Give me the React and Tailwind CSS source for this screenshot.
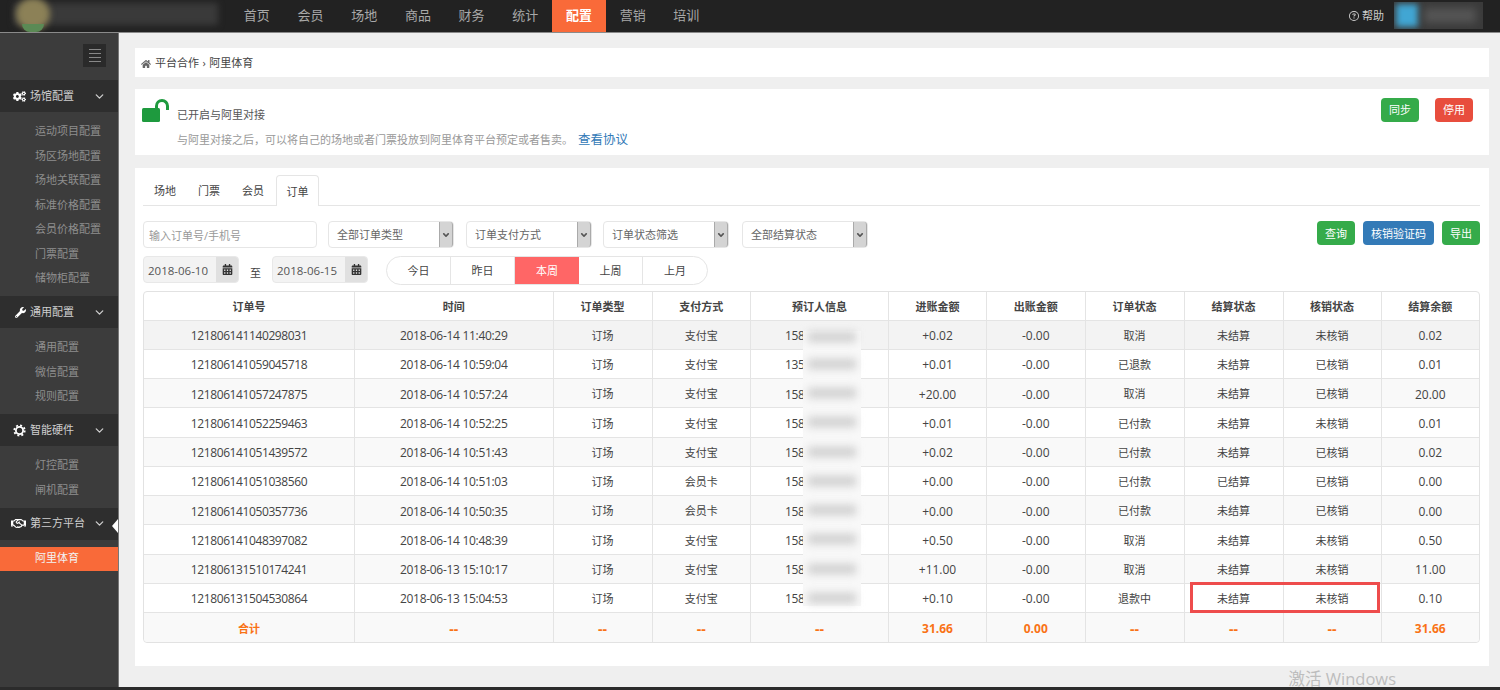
import { FaCogs, FaWrench, FaRegHandshake, FaHome, FaCalendarAlt, FaAngleDown } from "react-icons/fa";
import { FaRegCircleQuestion } from "react-icons/fa6";
import { ChevronDown } from "lucide-react";

const navItems = ["首页", "会员", "场地", "商品", "财务", "统计", "配置", "营销", "培训"];

function GearIcon() {
  return (
    <svg width="13" height="13" viewBox="0 0 13 13" fill="none" stroke="currentColor">
      <circle cx="6.5" cy="6.5" r="3.6" strokeWidth="1.8" />
      <circle cx="6.5" cy="6.5" r="5.2" strokeWidth="1.8" strokeDasharray="2 2.08" />
    </svg>
  );
}

const menu = [
  { title: "场馆配置", icon: <FaCogs className="text-[13px]" />, items: ["运动项目配置", "场区场地配置", "场地关联配置", "标准价格配置", "会员价格配置", "门票配置", "储物柜配置"] },
  { title: "通用配置", icon: <FaWrench className="text-[11px]" />, items: ["通用配置", "微信配置", "规则配置"] },
  { title: "智能硬件", icon: <GearIcon />, items: ["灯控配置", "闸机配置"] },
];

const columns = [
  ["订单号", "w-[211px]"],
  ["时间", "w-[198.5px]"],
  ["订单类型", "w-[99px]"],
  ["支付方式", "w-[98.5px]"],
  ["预订人信息", "w-[138px]"],
  ["进账金额", "w-[98px]"],
  ["出账金额", "w-[98.5px]"],
  ["订单状态", "w-[99px]"],
  ["结算状态", "w-[99px]"],
  ["核销状态", "w-[98px]"],
  ["结算余额", "w-[97.5px]"],
];

const orders = [
  ["121806141140298031", "2018-06-14 11:40:29", "支付宝", "158", "+0.02", "取消", "未结算", "未核销", "0.02"],
  ["121806141059045718", "2018-06-14 10:59:04", "支付宝", "135", "+0.01", "已退款", "未结算", "已核销", "0.01"],
  ["121806141057247875", "2018-06-14 10:57:24", "支付宝", "158", "+20.00", "取消", "未结算", "已核销", "20.00"],
  ["121806141052259463", "2018-06-14 10:52:25", "支付宝", "158", "+0.01", "已付款", "未结算", "未核销", "0.01"],
  ["121806141051439572", "2018-06-14 10:51:43", "支付宝", "158", "+0.02", "已付款", "未结算", "已核销", "0.02"],
  ["121806141051038560", "2018-06-14 10:51:03", "会员卡", "158", "+0.00", "已付款", "已结算", "已核销", "0.00"],
  ["121806141050357736", "2018-06-14 10:50:35", "会员卡", "158", "+0.00", "已付款", "未结算", "已核销", "0.00"],
  ["121806141048397082", "2018-06-14 10:48:39", "支付宝", "158", "+0.50", "取消", "未结算", "未核销", "0.50"],
  ["121806131510174241", "2018-06-13 15:10:17", "支付宝", "158", "+11.00", "取消", "未结算", "未核销", "11.00"],
  ["121806131504530864", "2018-06-13 15:04:53", "支付宝", "158", "+0.10", "退款中", "未结算", "未核销", "0.10"],
];

function Select({ label, className }) {
  return (
    <div className={"h-[27px] flex items-center justify-between rounded-[4px] border border-[#e6e6e6] bg-white pl-2 " + className}>
      <span className="text-[11px] pt-[2px] text-[#666]">{label}</span>
      <span className="w-[14px] h-full flex items-center justify-center bg-[#d4d4d4] border-x border-[#aaa] rounded-r-[3px]">
        <FaAngleDown className="text-[10px] text-[#555]" />
      </span>
    </div>
  );
}

function DateInput({ value }) {
  return (
    <div className="w-[96px] h-[27px] flex rounded-[4px] bg-[#f3f3f3] border border-[#e8e8e8] overflow-hidden">
      <span className="flex-1 pl-1 leading-[27px] text-[11.5px] text-[#555]">{value}</span>
      <span className="w-[22px] bg-[#e0e0e0] flex items-center justify-center">
        <FaCalendarAlt className="text-[11px] text-[#333]" />
      </span>
    </div>
  );
}

function Cell({ children, className = "", last }) {
  return (
    <div className={"flex items-center justify-center pt-[3px] " + (last ? "" : "border-r border-[#e4e4e4] ") + className}>
      {children}
    </div>
  );
}

export default function App() {
  return (
    <div className="w-[1500px] h-[690px] overflow-hidden flex flex-col bg-[#3c3c3c] text-[#333] font-['Open_Sans','Noto_Sans_CJK_SC',sans-serif]">
      <header className="h-[33px] shrink-0 flex bg-[#222] border-b border-[#8a8a8a]">
        <div className="w-[230px] relative overflow-hidden">
          <div className="absolute left-[14px] top-[3px] w-[204px] h-[22px] bg-[#3a3a3a] blur-[3px]" />
          <div className="absolute left-[16px] top-[-2px] w-[34px] h-[32px] rounded-full bg-[#8c8157] blur-[3px]" />
          <div className="absolute left-[22px] top-[24px] w-[22px] h-[8px] rounded-b-full bg-[#5b8a55]" />
        </div>
        <nav className="flex">
          {navItems.map((item) => (
            <a key={item} className={"w-[53.7px] h-[32px] flex items-center justify-center text-[13px] " + (item === "配置" ? "bg-[#f96a39] text-white font-bold" : "text-[#a8a8a8]")}>
              {item}
            </a>
          ))}
        </nav>
        <div className="ml-auto flex items-center pr-[17px]">
          <FaRegCircleQuestion className="text-[10px] text-[#ccc] mr-[3px]" />
          <span className="text-[11px] text-[#ccc] mr-[10px]">帮助</span>
          <div className="relative w-[89px] h-[27px] mt-[-2px] bg-[#3a3a3a] overflow-hidden">
            <div className="absolute left-[2px] top-[2px] w-[22px] h-[23px] bg-[#41a6d3] blur-[3px]" />
            <div className="absolute left-[30px] top-[6px] w-[52px] h-[15px] bg-[#555] blur-[4px]" />
          </div>
        </div>
      </header>

      <div className="flex-1 flex min-h-0">
        <aside className="w-[119px] shrink-0 bg-[#3c3c3c] border-r border-[#777]">
          <div className="h-[47px] pt-[11px] pr-[12px] flex justify-end">
            <div className="w-[23px] h-[23px] bg-[#2a2a2a] flex flex-col items-center justify-center gap-[3px]">
              <span className="w-[12px] h-px bg-[#888]" />
              <span className="w-[12px] h-px bg-[#888]" />
              <span className="w-[12px] h-px bg-[#888]" />
              <span className="w-[12px] h-px bg-[#888]" />
            </div>
          </div>
          {menu.map((group) => (
            <div key={group.title}>
              <div className="h-[32px] flex items-center bg-[#2e2e2e] text-[#cfcfcf] text-[11px]">
                <span className="w-[29px] flex justify-end pr-[3px] text-white">{group.icon}</span>
                <span className="pl-[1px]">{group.title}</span>
                <ChevronDown className="ml-auto mr-[12px] w-[13px] h-[13px]" strokeWidth={2.4} />
              </div>
              <div className="pt-[7px] pb-[5.5px]">
                {group.items.map((sub) => (
                  <div key={sub} className="h-[24.5px] pl-[35px] flex items-center text-[11px] text-[#8e8e8e]">{sub}</div>
                ))}
              </div>
            </div>
          ))}
          <div className="relative h-[32px] flex items-center bg-[#2e2e2e] text-[#cfcfcf] text-[11px]">
            <span className="w-[29px] flex justify-end pr-[3px] text-white"><FaRegHandshake className="text-[15px]" /></span>
            <span className="pl-[1px]">第三方平台</span>
            <ChevronDown className="ml-auto mr-[12px] w-[13px] h-[13px]" strokeWidth={2.4} />
            <span className="absolute right-0 top-[11px] border-y-[7px] border-y-transparent border-r-[6px] border-r-white" />
          </div>
          <div className="mt-[7px] h-[24px] pl-[35px] flex items-center bg-[#f96a39] text-[11px] text-[#f3f3f3]">阿里体育</div>
        </aside>

        <main className="relative flex-1 bg-[#efefef] pl-[16px] pr-[11px] pt-[15px]">
          <div className="h-[29px] bg-white flex items-center pl-[6px] pt-[2px] text-[11px] text-[#444]">
            <FaHome className="text-[10px] text-[#666] mr-[4px]" />
            <span>平台合作</span>
            <span className="mx-[3.5px]">›</span>
            <span>阿里体育</span>
          </div>

          <section className="mt-[12px] h-[66px] bg-white flex pl-[7px] pr-[16px] pt-[8px]">
            <svg width="27" height="23" viewBox="0 0 27 23" className="shrink-0 mt-[2px]">
              <rect x="0" y="9" width="18" height="14" rx="1.5" fill="#1e9a3e" />
              <path d="M14.5 10V7a5.5 5.5 0 0 1 11 0v4" fill="none" stroke="#1e9a3e" strokeWidth="3" />
            </svg>
            <div className="ml-[8px]">
              <div className="text-[11px] leading-[20px] text-[#555] mt-[8px]">已开启与阿里对接</div>
              <div className="text-[11px] leading-[16px] mt-[7px] text-[#999]">
                与阿里对接之后，可以将自己的场地或者门票投放到阿里体育平台预定或者售卖。
                <a className="ml-[5px] text-[12.5px] text-[#337ab7]">查看协议</a>
              </div>
            </div>
            <div className="ml-auto flex gap-[16px] pt-px">
              <button className="w-[38px] h-[24px] pt-px rounded-[4px] bg-[#35ab4a] text-white text-[11px]">同步</button>
              <button className="w-[38px] h-[24px] pt-px rounded-[4px] bg-[#e84d3d] text-white text-[11px]">停用</button>
            </div>
          </section>

          <section className="mt-[13px] h-[498px] bg-white pl-[8px] pr-[9px] pt-[7px]">
            <div className="flex h-[31px] border-b border-[#e5e5e5] text-[11px] text-[#444]">
              <a className="w-[44px] pt-[2px] flex items-center justify-center">场地</a>
              <a className="w-[44px] pt-[2px] flex items-center justify-center">门票</a>
              <a className="w-[44px] pt-[2px] flex items-center justify-center">会员</a>
              <a className="w-[43px] ml-[1px] h-[31px] pt-[2px] flex items-center justify-center bg-white border border-b-0 border-[#e5e5e5] rounded-t-[4px]">订单</a>
            </div>

            <div className="mt-[15px] flex items-start h-[27px]">
              <div className="w-[174px] h-[27px] rounded-[4px] border border-[#e6e6e6] pl-[5px] pt-[1px] leading-[25px] text-[11px] text-[#999]">输入订单号/手机号</div>
              <Select label="全部订单类型" className="ml-[11px] w-[126px]" />
              <Select label="订单支付方式" className="ml-[12px] w-[126px]" />
              <Select label="订单状态筛选" className="ml-[11px] w-[126px]" />
              <Select label="全部结算状态" className="ml-[13px] w-[126px]" />
              <div className="ml-auto flex gap-[8px] text-white text-[11px]">
                <button className="w-[38px] h-[24px] pt-[2px] rounded-[4px] bg-[#35ab4a]">查询</button>
                <button className="w-[71px] h-[24px] pt-[2px] rounded-[4px] bg-[#337ab7]">核销验证码</button>
                <button className="w-[38px] h-[24px] pt-[2px] rounded-[4px] bg-[#35ab4a]">导出</button>
              </div>
            </div>

            <div className="mt-[8px] flex items-start h-[29px]">
              <DateInput value="2018-06-10" />
              <span className="w-[33px] pt-[9px] text-center text-[11px] text-[#444]">至</span>
              <DateInput value="2018-06-15" />
              <div className="ml-[18px] w-[322px] h-[29px] flex rounded-full border border-[#e5e5e5] overflow-hidden text-[11px] text-[#444]">
                {["今日", "昨日", "本周", "上周", "上月"].map((d, i) => (
                  <span key={d} className={"w-[64px] pt-px flex items-center justify-center " + (d === "本周" ? "bg-[#ff6666] text-white" : i < 4 ? "border-r border-[#e5e5e5]" : "")}>{d}</span>
                ))}
              </div>
            </div>

            <div className="relative mt-[6px] w-[1337px] border border-[#e2e2e2] rounded-[4px] text-[12px] text-[#444]">
              <div className="flex h-[28.5px] font-bold text-[11px] border-b border-[#e4e4e4]">
                {columns.map(([title, w], i) => (
                  <Cell key={title} className={w} last={i === 10}>{title}</Cell>
                ))}
              </div>
              {orders.map((row, r) => (
                <div key={row[0]} className={"flex h-[29.25px] border-b border-[#e4e4e4] " + (r === 0 ? "bg-[#f3f3f3]" : r % 2 === 0 ? "bg-[#f9f9f9]" : "bg-white")}>
                  <Cell className="w-[211px]"><span className="tracking-[-0.4px]">{row[0]}</span></Cell>
                  <Cell className="w-[198.5px]"><span className="tracking-[-0.3px]">{row[1]}</span></Cell>
                  <Cell className="w-[99px] text-[11px]">订场</Cell>
                  <Cell className="w-[98.5px] text-[11px]">{row[2]}</Cell>
                  <Cell className="w-[138px] relative">
                    <span className="absolute left-[34px] tracking-[-0.3px]">{row[3]}</span>
                    <span className={"absolute left-[52px] w-[58px] bg-[#f8f8f8] " + (r === 0 ? "top-[10px] -bottom-px" : r === 9 ? "top-0 bottom-[6px]" : "top-0 -bottom-px")} />
                    <span className={"absolute left-[57px] w-[48px] h-[10px] bg-[#cfcfcf] blur-[4px] " + (r === 0 ? "top-[11px]" : "top-[9px]")} />
                  </Cell>
                  <Cell className="w-[98px]">{row[4]}</Cell>
                  <Cell className="w-[98.5px]">-0.00</Cell>
                  <Cell className="w-[99px] text-[11px]">{row[5]}</Cell>
                  <Cell className="w-[99px] text-[11px]">{row[6]}</Cell>
                  <Cell className="w-[98px] text-[11px]">{row[7]}</Cell>
                  <Cell className="w-[97.5px]" last>{row[8]}</Cell>
                </div>
              ))}
              <div className="flex h-[28.5px] bg-[#f9f9f9] text-[#f97316] font-bold text-[14px] rounded-b-[4px]">
                <Cell className="w-[211px] text-[11px]">合计</Cell>
                <Cell className="w-[198.5px]">--</Cell>
                <Cell className="w-[99px]">--</Cell>
                <Cell className="w-[98.5px]">--</Cell>
                <Cell className="w-[138px]">--</Cell>
                <Cell className="w-[98px] text-[12px]">31.66</Cell>
                <Cell className="w-[98.5px] text-[12px]">0.00</Cell>
                <Cell className="w-[99px]">--</Cell>
                <Cell className="w-[99px]">--</Cell>
                <Cell className="w-[98px]">--</Cell>
                <Cell className="w-[97.5px] text-[12px]" last>31.66</Cell>
              </div>
              <div className="absolute left-[1046px] top-[290px] w-[190px] h-[31px] border-[3px] border-[#ee4c4c]" />
            </div>
          </section>

          <div className="absolute right-[104px] bottom-[-3px] leading-[22px] text-[16.5px] text-[#bdbdbd]">激活 Windows</div>
        </main>
      </div>
      <div className="h-[3px] shrink-0 bg-[#2b2b2b]" />
    </div>
  );
}
